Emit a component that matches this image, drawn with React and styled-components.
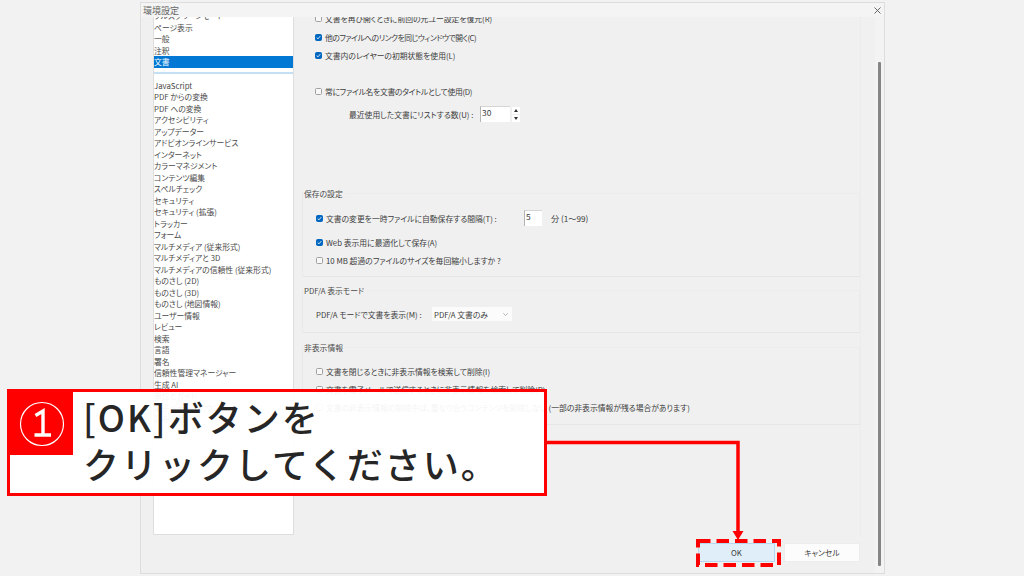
import React from "react";
import styled, { createGlobalStyle } from "styled-components";

const GlobalStyle = createGlobalStyle`
    html, body {
        margin: 0;
        padding: 0;
        background: #f2f2f2;
    }
    * {
        box-sizing: border-box;
    }
`;

const Page = styled.div`
    position: relative;
    width: 1024px;
    height: 576px;
    overflow: hidden;
    padding: 2px 139px 2px 140px;
    font-family: "Noto Sans CJK JP", "Liberation Sans", sans-serif;
    font-size: 7.8px;
    font-feature-settings: "palt";
    color: #3c3c3c;
`;

const Window = styled.div`
    height: 100%;
    border: 1px solid #dddddd;
    background: #f0f0f0;
    display: flex;
    flex-direction: column;
`;

const TitleBar = styled.div`
    height: 14px;
    flex-shrink: 0;
    background: #f4f4f4;
    display: flex;
    align-items: center;
    justify-content: space-between;
    padding: 0 3px 0 2px;
    font-size: 9px;
    font-feature-settings: normal;
    color: #666666;
`;

const WindowBody = styled.div`
    flex: 1;
    min-height: 0;
    display: flex;
`;

const MainColumn = styled.div`
    flex: 1;
    min-width: 0;
    display: flex;
    flex-direction: column;
`;

const Panels = styled.div`
    height: 518px;
    display: flex;
    padding-left: 12px;
`;

const Sidebar = styled.div`
    width: 141px;
    flex-shrink: 0;
    background: #ffffff;
    border: 1px solid #dedede;
    border-top: none;
    overflow: hidden;
    display: flex;
    flex-direction: column;
`;

const SideItem = styled.div`
    height: 11.5px;
    flex-shrink: 0;
    line-height: 11.5px;
    white-space: nowrap;
    background: ${(p) => (p.$active ? "#0078d4" : "transparent")};
    color: ${(p) => (p.$active ? "#ffffff" : "#4a4a4a")};
`;

const SideClipped = styled(SideItem)`
    margin-top: -7px;
`;

const SideDivider = styled.div`
    height: 2px;
    flex-shrink: 0;
    background: #c5e0f4;
    margin: 4px 0 6px 0;
`;

const Pane = styled.div`
    width: 559px;
    margin-left: 8px;
    overflow: hidden;
    border-right: 1px solid #ececec;
    display: flex;
    flex-direction: column;
`;

const Row = styled.div`
    height: 18px;
    flex-shrink: 0;
    display: flex;
    align-items: center;
    padding-left: 13px;
    margin-top: ${(p) => p.$top || 0}px;
    letter-spacing: ${(p) => p.$tight || 0}px;
    white-space: nowrap;
`;

const ClippedRow = styled(Row)`
    margin-top: -8px;
`;

const Box = styled.span`
    width: 7px;
    height: 7px;
    flex-shrink: 0;
    border-radius: 1.5px;
    margin-right: 3px;
    border: 1px solid ${(p) => (p.$checked ? "#0067c0" : "#a0a0a0")};
    background: ${(p) => (p.$checked ? "#0067c0" : "#f8f8f8")};
    display: flex;
    align-items: center;
    justify-content: center;
`;

const Check = ({ checked, children }) => (
    <>
        <Box $checked={checked}>
            {checked && (
                <svg width="5" height="5" viewBox="0 0 6 6">
                    <path d="M0.8 3.1 L2.4 4.6 L5.2 1.3" fill="none" stroke="#fff" strokeWidth="1" />
                </svg>
            )}
        </Box>
        <span>{children}</span>
    </>
);

const FieldLabel = styled.div`
    width: ${(p) => p.$w}px;
    margin-left: ${(p) => p.$left || 0}px;
    flex-shrink: 0;
    display: flex;
    align-items: center;
`;

const NumberField = styled.div`
    width: ${(p) => p.$w}px;
    height: 16px;
    background: #ffffff;
    border-left: 1px solid #b5b5b5;
    border-top: 1px solid #d5d5d5;
    padding-left: 1px;
    line-height: 11px;
    font-size: 8.4px;
`;

const Spinner = styled.div`
    display: flex;
    flex-direction: column;
    gap: 1px;
    margin-left: 2px;
`;

const SpinButton = styled.div`
    width: 8px;
    height: 7px;
    background: #ffffff;
    display: flex;
    align-items: center;
    justify-content: center;
`;

const Group = styled.div`
    height: ${(p) => p.$h}px;
    flex-shrink: 0;
    margin-top: ${(p) => p.$top}px;
    border: 1px solid #ececec;
    border-left-color: #e9e9e9;
    border-bottom-color: #e6e6e6;
    display: flex;
    flex-direction: column;
`;

const GroupTitle = styled.div`
    height: 0;
    line-height: 0;
    padding-left: 1px;
    margin-bottom: ${(p) => p.$gap}px;
    color: #4a4a4a;
`;

const GroupLabel = styled.span`
    background: #f0f0f0;
    padding-right: 2px;
`;

const Unit = styled.span`
    margin-left: 9px;
    font-size: 8.2px;
`;

const Select = styled.div`
    width: 80px;
    height: 14px;
    background: #fbfbfb;
    display: flex;
    align-items: center;
    justify-content: space-between;
    padding: 0 4px 0 2px;
`;

const Footer = styled.div`
    flex: 1;
    display: flex;
    justify-content: flex-end;
    align-items: flex-start;
    gap: 9px;
    padding: 8px 15px 0 0;
`;

const Button = styled.div`
    width: ${(p) => p.$w}px;
    height: 19px;
    display: flex;
    align-items: center;
    justify-content: center;
    background: ${(p) => (p.$primary ? "#e0eef9" : "#fcfcfc")};
    border: 1px solid ${(p) => (p.$primary ? "#b7d6ef" : "#ededed")};
    color: #3a3a3a;
`;

const ScrollTrack = styled.div`
    width: 9px;
    flex-shrink: 0;
    background: #f3f3f3;
    padding: 45px 2px 7px 3px;
`;

const ScrollThumb = styled.div`
    height: 100%;
    width: 3px;
    background: #858585;
    border-radius: 1px;
`;

/* callout over the dialog */
const Callout = styled.div`
    position: absolute;
    left: 7px;
    top: 389px;
    width: 540px;
    height: 107px;
    background: rgba(255, 255, 255, 0.94);
    border: 3.5px solid #ff0000;
    display: flex;
`;

const Badge = styled.div`
    width: 63px;
    height: 63px;
    flex-shrink: 0;
    background: #ff0000;
    display: flex;
    align-items: center;
    justify-content: center;
`;

const CalloutText = styled.div`
    padding: 1px 0 0 10px;
    font-size: 36px;
    font-feature-settings: normal;
    font-weight: 500;
    line-height: 47px;
    letter-spacing: 2px;
    color: #262626;
    white-space: nowrap;
`;

const OverlayLine = styled.svg`
    position: absolute;
    left: 0;
    top: 0;
    pointer-events: none;
`;

const topItems = ["ページ表示", "一般", "注釈"];
const listItems = [
    "JavaScript", "PDF からの変換", "PDF への変換", "アクセシビリティ", "アップデーター",
    "アドビオンラインサービス", "インターネット", "カラーマネジメント", "コンテンツ編集",
    "スペルチェック", "セキュリティ", "セキュリティ (拡張)", "トラッカー", "フォーム",
    "マルチメディア (従来形式)", "マルチメディアと 3D", "マルチメディアの信頼性 (従来形式)",
    "ものさし (2D)", "ものさし (3D)", "ものさし (地図情報)", "ユーザー情報", "レビュー",
    "検索", "言語", "署名", "信頼性管理マネージャー", "生成 AI", "単位とガイド",
    "電子メールアカウント", "読み上げ",
];

export default function App() {
    return (
        <Page>
            <GlobalStyle />
            <Window>
                <TitleBar>
                    <span>環境設定</span>
                    <svg width="7" height="7" viewBox="0 0 7 7">
                        <path d="M0.5 0.5 L6.5 6.5 M6.5 0.5 L0.5 6.5" stroke="#555" strokeWidth="0.9" />
                    </svg>
                </TitleBar>
                <WindowBody>
                    <MainColumn>
                        <Panels>
                            <Sidebar>
                                <SideClipped>フルスクリーンモード</SideClipped>
                                {topItems.map((t) => <SideItem key={t}>{t}</SideItem>)}
                                <SideItem $active>文書</SideItem>
                                <SideDivider />
                                {listItems.map((t) => <SideItem key={t}>{t}</SideItem>)}
                            </Sidebar>
                            <Pane>
                                <ClippedRow><Check>文書を再び開くときに前回の元ユー設定を復元(R)</Check></ClippedRow>
                                <Row $top={1} $tight={-0.5}><Check checked>他のファイルへのリンクを同じウィンドウで開く(C)</Check></Row>
                                <Row><Check checked>文書内のレイヤーの初期状態を使用(L)</Check></Row>
                                <Row $top={18} $tight={-0.3}><Check>常にファイル名を文書のタイトルとして使用(D)</Check></Row>
                                <Row $top={5}>
                                    <FieldLabel $w={131} $left={34}>最近使用した文書にリストする数(U) :</FieldLabel>
                                    <NumberField $w={30}>30</NumberField>
                                    <Spinner>
                                        <SpinButton>
                                            <svg width="4" height="3" viewBox="0 0 4 3"><path d="M2 0 L4 3 L0 3 Z" fill="#333" /></svg>
                                        </SpinButton>
                                        <SpinButton>
                                            <svg width="4" height="3" viewBox="0 0 4 3"><path d="M2 3 L4 0 L0 0 Z" fill="#333" /></svg>
                                        </SpinButton>
                                    </Spinner>
                                </Row>
                                <Group $h={84} $top={70}>
                                    <GroupTitle $gap={15}><GroupLabel>保存の設定</GroupLabel></GroupTitle>
                                    <Row>
                                        <FieldLabel $w={208}><Check checked>文書の変更を一時ファイルに自動保存する間隔(T) :</Check></FieldLabel>
                                        <NumberField $w={18}>5</NumberField>
                                        <Unit>分 (1～99)</Unit>
                                    </Row>
                                    <Row $top={6}><Check checked>Web 表示用に最適化して保存(A)</Check></Row>
                                    <Row><Check>10 MB 超過のファイルのサイズを毎回縮小しますか ?</Check></Row>
                                </Group>
                                <Group $h={43} $top={13}>
                                    <GroupTitle $gap={14}><GroupLabel>PDF/A 表示モード</GroupLabel></GroupTitle>
                                    <Row>
                                        <FieldLabel $w={116}>PDF/A モードで文書を表示(M) :</FieldLabel>
                                        <Select>
                                            <span>PDF/A 文書のみ</span>
                                            <svg width="5" height="3" viewBox="0 0 5 3"><path d="M0.3 0.3 L2.5 2.5 L4.7 0.3" fill="none" stroke="#888" strokeWidth="0.6" /></svg>
                                        </Select>
                                    </Row>
                                </Group>
                                <Group $h={78} $top={14}>
                                    <GroupTitle $gap={14}><GroupLabel>非表示情報</GroupLabel></GroupTitle>
                                    <Row><Check>文書を閉じるときに非表示情報を検索して削除(I)</Check></Row>
                                    <Row><Check>文書を電子メールで送信するときに非表示情報を検索して削除(P)</Check></Row>
                                    <Row><Check>文書の非表示情報の削除中は、重なり合うコンテンツを削除しない (一部の非表示情報が残る場合があります)</Check></Row>
                                </Group>
                            </Pane>
                        </Panels>
                        <Footer>
                            <Button $primary $w={77}>OK</Button>
                            <Button $w={76}>キャンセル</Button>
                        </Footer>
                    </MainColumn>
                    <ScrollTrack><ScrollThumb /></ScrollTrack>
                </WindowBody>
            </Window>
            <OverlayLine width="1024" height="576" viewBox="0 0 1024 576">
                <path d="M546 442.5 H738 V534" fill="none" stroke="#ff0000" strokeWidth="3.5" />
                <path d="M732.5 531 L743.5 531 L738 540 Z" fill="#ff0000" />
                <rect x="698" y="541" width="81" height="24" fill="none" stroke="#ff0000" strokeWidth="4" strokeDasharray="12.5 6" />
            </OverlayLine>
            <Callout>
                <Badge>
                    <svg width="46" height="46" viewBox="0 0 46 46">
                        <circle cx="23" cy="23" r="21.5" fill="none" stroke="#fff" strokeWidth="1.2" />
                        <path d="M16.5 14.5 L24 10 V34 M15.5 34 H32" fill="none" stroke="#fff" strokeWidth="3.4" />
                    </svg>
                </Badge>
                <CalloutText>[OK]ボタンを<br />クリックしてください。</CalloutText>
            </Callout>
        </Page>
    );
}
